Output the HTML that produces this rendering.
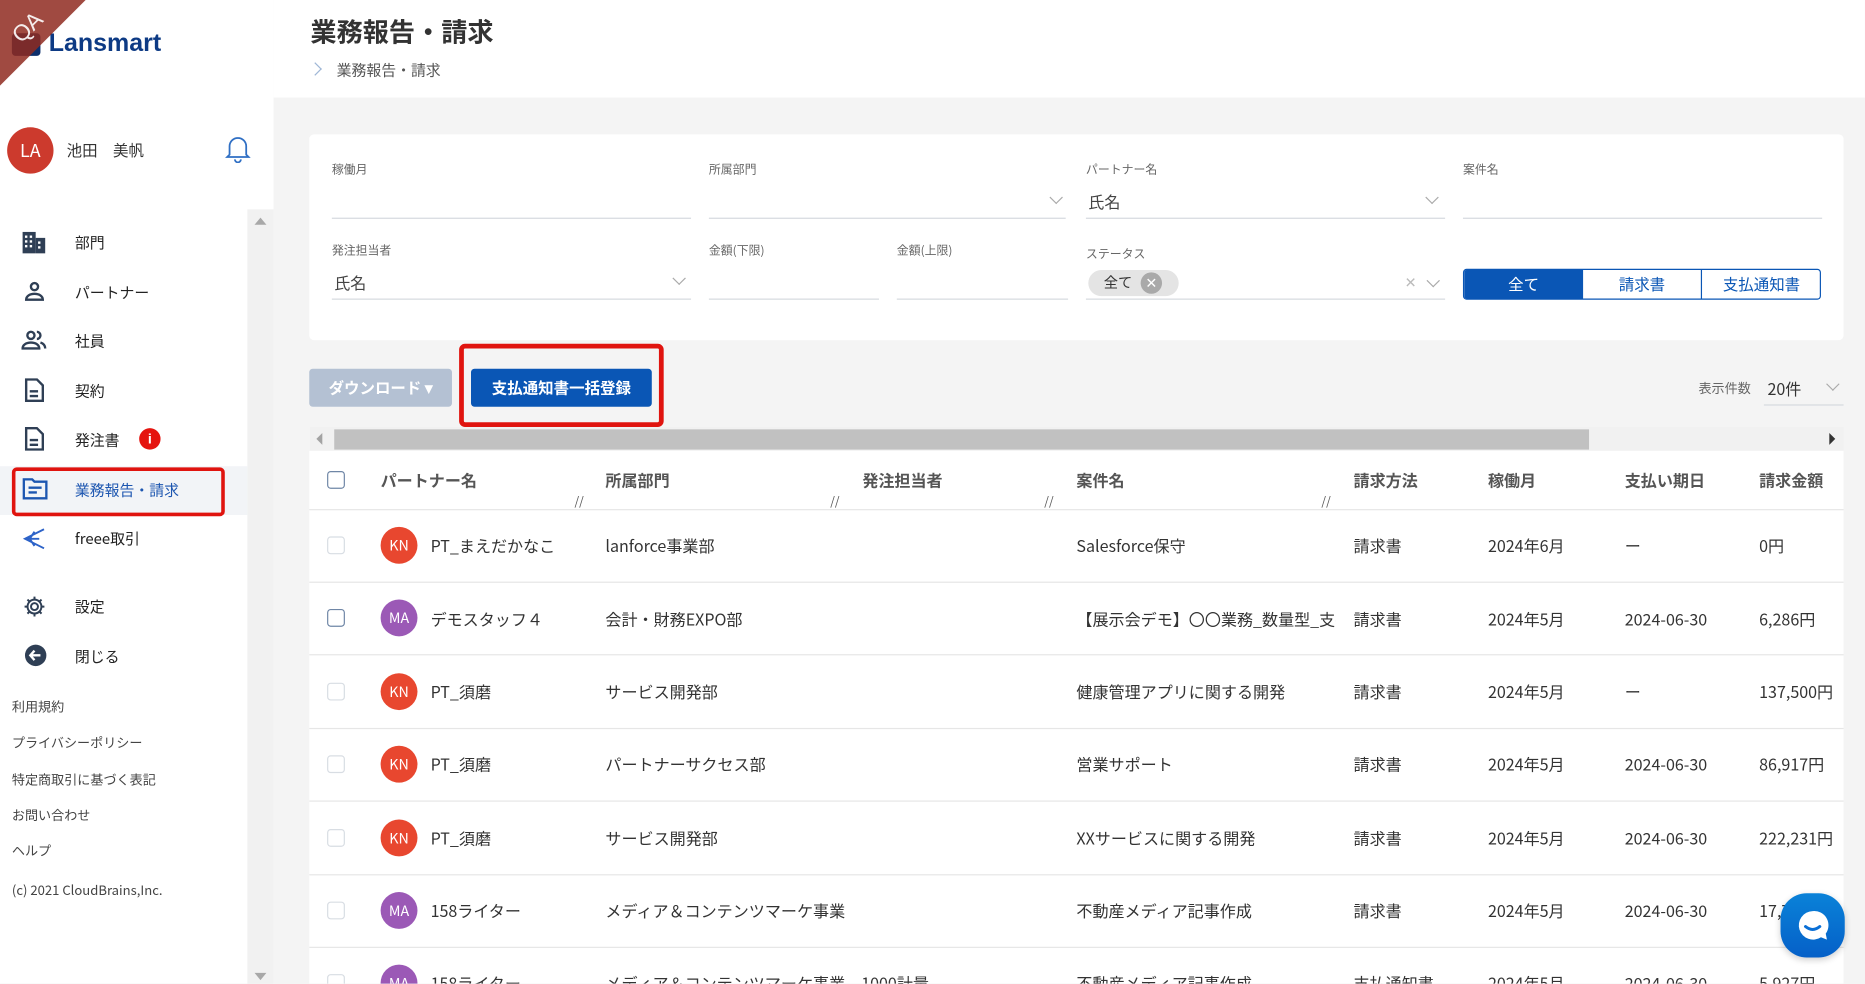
<!DOCTYPE html>
<html><head><meta charset="utf-8">
<style>
*{box-sizing:border-box;margin:0;padding:0}
html,body{width:1865px;height:983px;overflow:hidden;background:#f4f4f4}
#w{position:absolute;left:0;top:0;width:1568px;height:827px;transform:scale(1.1894);transform-origin:0 0;font-family:"Noto Sans CJK JP","Liberation Sans",sans-serif;color:#333;overflow:hidden;background:#f4f4f4}
.a{position:absolute;white-space:nowrap;line-height:1.2}
.c{transform:translateY(-50%)}
.nav{font-size:12.5px;color:#222}
.ft{font-size:11px;color:#444}
.lb{font-size:10px;color:#666}
.ul{position:absolute;height:1px;background:#d5d9de}
.chev{position:absolute;width:8px;height:8px;border-right:1.3px solid #aaa;border-bottom:1.3px solid #aaa;transform:rotate(45deg)}
.th{font-size:13.5px;font-weight:bold;color:#555}
.td{font-size:13.5px;color:#333}
.rs{position:absolute;font-size:10px;color:#555}
.av{position:absolute;width:31px;height:31px;border-radius:50%;color:#fff;font-size:12px;text-align:center;line-height:31px}
.cb{position:absolute;width:15px;height:15px;border:1.5px solid #6f86a6;border-radius:3px;background:#fff}
.cb.d{border-color:#d8dde3}
.rl{position:absolute;left:260px;width:1290px;height:1px;background:#e6e6e6}
</style></head><body><div id="w">
<div class="a" style="left:0;top:0;width:230px;height:827px;background:#fff"></div>
<div class="a" style="left:208px;top:176px;width:22px;height:651px;background:#f1f1f1"></div>
<div class="a" style="left:214px;top:183px;width:0;height:0;border-left:5px solid transparent;border-right:5px solid transparent;border-bottom:6px solid #a8a8a8"></div>
<div class="a" style="left:214px;top:818px;width:0;height:0;border-left:5px solid transparent;border-right:5px solid transparent;border-top:6px solid #a8a8a8"></div>
<div class="a" style="left:10px;top:28px;width:24px;height:19px;background:#0d2f6b;border-radius:3px"></div>
<div class="a" style="left:41px;top:24px;font-family:'Liberation Sans',sans-serif;font-size:21px;font-weight:bold;color:#0d3a84">Lansmart</div>
<svg class="a" style="left:0;top:0" width="75" height="75"><polygon points="0,0 72,0 0,72" fill="#8f2a20" opacity="0.85"/><text x="10" y="32" fill="#fff" font-size="19" font-family="Liberation Sans" transform="rotate(-45 20 25)" opacity="0.9">QA</text></svg>
<div class="av" style="left:6px;top:107px;width:39px;height:39px;line-height:39px;font-size:15px;background:#cc3a2d">LA</div>
<div class="a c" style="left:56px;top:126px;font-size:13px;color:#333">池田　美帆</div>
<svg class="a" style="left:189px;top:113px" width="22" height="24" viewBox="0 0 22 24" fill="none" stroke="#2f6fc4" stroke-width="1.5"><path d="M4 17V10a7 7 0 0 1 14 0v7l2 2H2z"/><path d="M8.5 21a2.5 2.5 0 0 0 5 0"/></svg>
<div class="a" style="left:0;top:392px;width:208px;height:41px;background:#f2f4f7"></div>
<div class="a" style="left:10px;top:393px;width:179px;height:41px;border:3px solid #e0140f;border-radius:4px"></div>
<svg class="a" style="left:18px;top:194px" width="22" height="20" viewBox="0 0 22 20" fill="#2f3f55"><rect x="1" y="1" width="11" height="18"/><rect x="12" y="6" width="8" height="13"/><g fill="#fff"><rect x="3" y="4" width="2" height="2"/><rect x="7" y="4" width="2" height="2"/><rect x="3" y="8" width="2" height="2"/><rect x="7" y="8" width="2" height="2"/><rect x="3" y="12" width="2" height="2"/><rect x="7" y="12" width="2" height="2"/><rect x="14" y="9" width="2" height="2"/><rect x="14" y="13" width="2" height="2"/></g></svg>
<div class="a c nav" style="left:63px;top:203px">部門</div>
<svg class="a" style="left:20px;top:236px" width="18" height="18" viewBox="0 0 18 18" fill="none" stroke="#2f3f55" stroke-width="2"><circle cx="9" cy="5" r="3"/><path d="M2 16c0-3 3-5 7-5s7 2 7 5z"/></svg>
<div class="a c nav" style="left:63px;top:245px">パートナー</div>
<svg class="a" style="left:18px;top:277px" width="22" height="18" viewBox="0 0 22 18" fill="none" stroke="#2f3f55" stroke-width="2"><circle cx="8" cy="5" r="3"/><path d="M1 16c0-3 3-5 7-5s7 2 7 5z"/><path d="M13 2a3 3 0 0 1 0 6M16 11c3 1 4 3 4 5"/></svg>
<div class="a c nav" style="left:63px;top:286px">社員</div>
<svg class="a" style="left:20px;top:318px" width="17" height="20" viewBox="0 0 17 20" fill="none" stroke="#2f3f55" stroke-width="2"><path d="M2 1h9l5 5v13H2z"/><path d="M5 11h7M5 15h7"/></svg>
<div class="a c nav" style="left:63px;top:328px">契約</div>
<svg class="a" style="left:20px;top:359px" width="17" height="20" viewBox="0 0 17 20" fill="none" stroke="#2f3f55" stroke-width="2"><path d="M2 1h9l5 5v13H2z"/><path d="M5 11h7M5 15h7"/></svg>
<div class="a c nav" style="left:63px;top:369px">発注書</div>
<div class="a" style="left:117px;top:360px;width:18px;height:18px;border-radius:50%;background:#e5140f;color:#fff;font-size:12px;font-weight:bold;text-align:center;line-height:18px;font-family:'Liberation Sans'">i</div>
<svg class="a" style="left:19px;top:402px" width="21" height="18" viewBox="0 0 21 18" fill="none" stroke="#1d56b0" stroke-width="2"><path d="M1 1h7l2 2h10v14H1z"/><path d="M5 8h11M5 12h7"/></svg>
<div class="a c nav" style="left:63px;top:411px;color:#1d56b0">業務報告・請求</div>
<svg class="a" style="left:19px;top:443px" width="20" height="20" viewBox="0 0 20 20" fill="none" stroke="#2d63c8" stroke-width="1.6"><path d="M18 2L2 10l16 8M2 10h12M10 4l-4 6 4 6"/></svg>
<div class="a c nav" style="left:63px;top:452px">freee取引</div>
<svg class="a" style="left:19px;top:500px" width="20" height="20" viewBox="0 0 24 24" fill="none" stroke="#2f3f55" stroke-width="2"><circle cx="12" cy="12" r="3.5"/><path d="M12 2v3M12 19v3M2 12h3M19 12h3M4.9 4.9l2.1 2.1M17 17l2.1 2.1M4.9 19.1L7 17M17 7l2.1-2.1"/><circle cx="12" cy="12" r="7"/></svg>
<div class="a c nav" style="left:63px;top:509px">設定</div>
<div class="a" style="left:21px;top:542px;width:18px;height:18px;border-radius:50%;background:#2f3f55"></div>
<svg class="a" style="left:21px;top:542px" width="18" height="18" viewBox="0 0 18 18" fill="none" stroke="#fff" stroke-width="2"><path d="M13 9H5M8 5L4.5 9 8 13"/></svg>
<div class="a c nav" style="left:63px;top:551px">閉じる</div>
<div class="a c ft" style="left:10px;top:595px">利用規約</div>
<div class="a c ft" style="left:10px;top:625px">プライバシーポリシー</div>
<div class="a c ft" style="left:10px;top:656px">特定商取引に基づく表記</div>
<div class="a c ft" style="left:10px;top:686px">お問い合わせ</div>
<div class="a c ft" style="left:10px;top:716px">ヘルプ</div>
<div class="a c ft" style="left:10px;top:749px">(c) 2021 CloudBrains,Inc.</div>
<div class="a" style="left:230px;top:0;width:1338px;height:82px;background:#fff"></div>
<div class="a c" style="left:261px;top:26px;font-size:22px;font-weight:bold;color:#333">業務報告・請求</div>
<div class="chev" style="left:261px;top:54px;transform:rotate(-45deg);border-color:#9fb6d6"></div>
<div class="a c" style="left:283px;top:58px;font-size:12.5px;color:#555">業務報告・請求</div>
<div class="a" style="left:260px;top:113px;width:1290px;height:173px;background:#fff;border-radius:4px"></div>
<div class="a c lb" style="left:279px;top:142px">稼働月</div>
<div class="a c lb" style="left:596px;top:142px">所属部門</div>
<div class="a c lb" style="left:913px;top:142px">パートナー名</div>
<div class="a c lb" style="left:1230px;top:142px">案件名</div>
<div class="ul" style="left:279px;top:183px;width:302px"></div>
<div class="ul" style="left:596px;top:183px;width:300px"></div>
<div class="ul" style="left:913px;top:183px;width:302px"></div>
<div class="ul" style="left:1230px;top:183px;width:302px"></div>
<div class="chev" style="left:884px;top:162px"></div>
<div class="chev" style="left:1200px;top:162px"></div>
<div class="a c" style="left:915px;top:169px;font-size:13.5px;color:#444">氏名</div>
<div class="a c lb" style="left:279px;top:210px">発注担当者</div>
<div class="a c lb" style="left:596px;top:210px">金額(下限)</div>
<div class="a c lb" style="left:754px;top:210px">金額(上限)</div>
<div class="a c lb" style="left:913px;top:213px">ステータス</div>
<div class="ul" style="left:279px;top:251px;width:302px"></div>
<div class="ul" style="left:596px;top:251px;width:143px"></div>
<div class="ul" style="left:754px;top:251px;width:144px"></div>
<div class="ul" style="left:913px;top:251px;width:302px"></div>
<div class="a c" style="left:281px;top:237px;font-size:13.5px;color:#444">氏名</div>
<div class="chev" style="left:567px;top:230px"></div>
<div class="a" style="left:915px;top:227px;width:76px;height:22px;border-radius:11px;background:#e4e4e4"></div>
<div class="a c" style="left:928px;top:238px;font-size:12px;color:#333">全て</div>
<div class="a" style="left:959px;top:229px;width:18px;height:18px;border-radius:50%;background:#a9a9a9;color:#fff;font-size:12px;text-align:center;line-height:18px;font-family:'DejaVu Sans'">✕</div>
<div class="a c" style="left:1181px;top:238px;font-size:12px;color:#bbb;font-family:'DejaVu Sans'">✕</div>
<div class="chev" style="left:1201px;top:232px"></div>
<div class="a" style="left:1230px;top:226px;width:301px;height:26px;border:1px solid #0a56b5;border-radius:3px;background:#fff;overflow:hidden;font-size:13px">
<div class="a" style="left:0;top:0;width:100px;height:24px;background:#0a56b5;color:#fff;text-align:center;line-height:24px">全て</div>
<div class="a" style="left:100px;top:0;width:100px;height:24px;color:#0a56b5;text-align:center;line-height:24px;border-right:1px solid #0a56b5">請求書</div>
<div class="a" style="left:200px;top:0;width:100px;height:24px;color:#0a56b5;text-align:center;line-height:24px">支払通知書</div>
</div>
<div class="a" style="left:260px;top:310px;width:120px;height:32px;background:#b4c1d3;border-radius:3px;color:#fff;font-size:13px;font-weight:bold;text-align:center;line-height:32px">ダウンロード ▾</div>
<div class="a" style="left:386px;top:289px;width:172px;height:70px;border:4px solid #e0140f;border-radius:5px"></div>
<div class="a" style="left:396px;top:310px;width:152px;height:32px;background:#0a56b5;border-radius:3px;color:#fff;font-size:13px;font-weight:bold;text-align:center;line-height:32px">支払通知書一括登録</div>
<div class="a c" style="left:1428px;top:327px;font-size:11px;color:#666">表示件数</div>
<div class="a c" style="left:1486px;top:326px;font-size:13.5px;color:#333">20件</div>
<div class="ul" style="left:1483px;top:340px;width:67px"></div>
<div class="chev" style="left:1537px;top:319px"></div>
<div class="a" style="left:260px;top:359px;width:1290px;height:468px;background:#fff"></div>
<div class="a" style="left:260px;top:359px;width:1290px;height:20px;background:#f1f1f1"></div>
<div class="a" style="left:281px;top:361px;width:1055px;height:17px;background:#c1c1c1"></div>
<div class="a" style="left:266px;top:364px;width:0;height:0;border-top:5px solid transparent;border-bottom:5px solid transparent;border-right:5px solid #a3a3a3"></div>
<div class="a" style="left:1538px;top:364px;width:0;height:0;border-top:5px solid transparent;border-bottom:5px solid transparent;border-left:5px solid #333"></div>
<div class="cb" style="left:275px;top:396px"></div>
<div class="a c th" style="left:320px;top:403px">パートナー名</div>
<div class="a c th" style="left:509px;top:403px">所属部門</div>
<div class="a c th" style="left:725px;top:403px">発注担当者</div>
<div class="a c th" style="left:905px;top:403px">案件名</div>
<div class="a c th" style="left:1138px;top:403px">請求方法</div>
<div class="a c th" style="left:1251px;top:403px">稼働月</div>
<div class="a c th" style="left:1366px;top:403px">支払い期日</div>
<div class="a c th" style="left:1479px;top:403px">請求金額</div>
<div class="rs" style="left:483px;top:413px">//</div>
<div class="rs" style="left:698px;top:413px">//</div>
<div class="rs" style="left:878px;top:413px">//</div>
<div class="rs" style="left:1111px;top:413px">//</div>
<div class="rl" style="top:428px"></div>

<div class="cb d" style="left:275px;top:451px"></div>
<div class="av" style="left:320px;top:443px;background:#e8472f">KN</div>
<div class="a c td" style="left:362px;top:458px">PT_まえだかなこ</div>
<div class="a c td" style="left:509px;top:458px">lanforce事業部</div>
<div class="a c td" style="left:905px;top:458px">Salesforce保守</div>
<div class="a c td" style="left:1138px;top:458px">請求書</div>
<div class="a c td" style="left:1251px;top:458px">2024年6月</div>
<div class="a c td" style="left:1366px;top:458px">ー</div>
<div class="a c td" style="left:1479px;top:458px">0円</div>
<div class="rl" style="top:489px"></div>

<div class="cb" style="left:275px;top:512px"></div>
<div class="av" style="left:320px;top:504px;background:#9b59b6">MA</div>
<div class="a c td" style="left:362px;top:520px">デモスタッフ４</div>
<div class="a c td" style="left:509px;top:520px">会計・財務EXPO部</div>
<div class="a c td" style="left:905px;top:520px;width:218px;overflow:hidden">【展示会デモ】〇〇業務_数量型_支払</div>
<div class="a c td" style="left:1138px;top:520px">請求書</div>
<div class="a c td" style="left:1251px;top:520px">2024年5月</div>
<div class="a c td" style="left:1366px;top:520px">2024-06-30</div>
<div class="a c td" style="left:1479px;top:520px">6,286円</div>
<div class="rl" style="top:550px"></div>

<div class="cb d" style="left:275px;top:574px"></div>
<div class="av" style="left:320px;top:566px;background:#e8472f">KN</div>
<div class="a c td" style="left:362px;top:581px">PT_須磨</div>
<div class="a c td" style="left:509px;top:581px">サービス開発部</div>
<div class="a c td" style="left:905px;top:581px">健康管理アプリに関する開発</div>
<div class="a c td" style="left:1138px;top:581px">請求書</div>
<div class="a c td" style="left:1251px;top:581px">2024年5月</div>
<div class="a c td" style="left:1366px;top:581px">ー</div>
<div class="a c td" style="left:1479px;top:581px">137,500円</div>
<div class="rl" style="top:612px"></div>

<div class="cb d" style="left:275px;top:635px"></div>
<div class="av" style="left:320px;top:627px;background:#e8472f">KN</div>
<div class="a c td" style="left:362px;top:642px">PT_須磨</div>
<div class="a c td" style="left:509px;top:642px">パートナーサクセス部</div>
<div class="a c td" style="left:905px;top:642px">営業サポート</div>
<div class="a c td" style="left:1138px;top:642px">請求書</div>
<div class="a c td" style="left:1251px;top:642px">2024年5月</div>
<div class="a c td" style="left:1366px;top:642px">2024-06-30</div>
<div class="a c td" style="left:1479px;top:642px">86,917円</div>
<div class="rl" style="top:673px"></div>

<div class="cb d" style="left:275px;top:697px"></div>
<div class="av" style="left:320px;top:689px;background:#e8472f">KN</div>
<div class="a c td" style="left:362px;top:704px">PT_須磨</div>
<div class="a c td" style="left:509px;top:704px">サービス開発部</div>
<div class="a c td" style="left:905px;top:704px">XXサービスに関する開発</div>
<div class="a c td" style="left:1138px;top:704px">請求書</div>
<div class="a c td" style="left:1251px;top:704px">2024年5月</div>
<div class="a c td" style="left:1366px;top:704px">2024-06-30</div>
<div class="a c td" style="left:1479px;top:704px">222,231円</div>
<div class="rl" style="top:735px"></div>

<div class="cb d" style="left:275px;top:758px"></div>
<div class="av" style="left:320px;top:750px;background:#9b59b6">MA</div>
<div class="a c td" style="left:362px;top:765px">158ライター</div>
<div class="a c td" style="left:509px;top:765px">メディア＆コンテンツマーケ事業</div>
<div class="a c td" style="left:905px;top:765px">不動産メディア記事作成</div>
<div class="a c td" style="left:1138px;top:765px">請求書</div>
<div class="a c td" style="left:1251px;top:765px">2024年5月</div>
<div class="a c td" style="left:1366px;top:765px">2024-06-30</div>
<div class="a c td" style="left:1479px;top:765px">17,776円</div>
<div class="rl" style="top:796px"></div>

<div class="cb d" style="left:275px;top:819px"></div>
<div class="av" style="left:320px;top:811px;background:#9b59b6">MA</div>
<div class="a c td" style="left:362px;top:826px">158ライター</div>
<div class="a c td" style="left:509px;top:826px">メディア＆コンテンツマーケ事業　1000計量</div>
<div class="a c td" style="left:905px;top:826px">不動産メディア記事作成</div>
<div class="a c td" style="left:1138px;top:826px">支払通知書</div>
<div class="a c td" style="left:1251px;top:826px">2024年5月</div>
<div class="a c td" style="left:1366px;top:826px">2024-06-30</div>
<div class="a c td" style="left:1479px;top:826px">5,927円</div>

<div class="a" style="left:1497px;top:751px;width:54px;height:54px;border-radius:22px;background:linear-gradient(#0a82d8,#0560c8);box-shadow:0 2px 6px rgba(0,0,0,.2)"></div>
<svg class="a" style="left:1505px;top:759px" width="38" height="38" viewBox="0 0 38 38"><path d="M19 7a12 12 0 1 0 7 22l5 2-1-5A12 12 0 0 0 19 7z" fill="#fff"/><path d="M13 20q6 5 12 0" fill="none" stroke="#0a6fd6" stroke-width="2.5" stroke-linecap="round"/></svg>
</div></body></html>
